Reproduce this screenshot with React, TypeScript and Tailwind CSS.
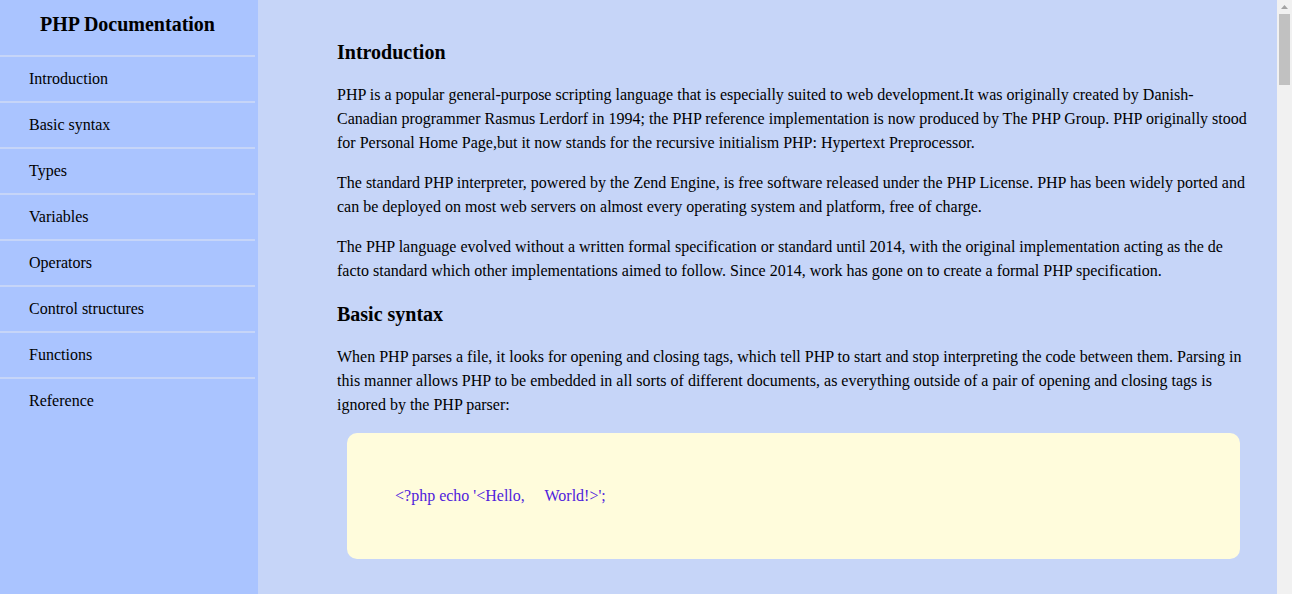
import React from 'react';

const navItems = [
  'Introduction',
  'Basic syntax',
  'Types',
  'Variables',
  'Operators',
  'Control structures',
  'Functions',
  'Reference',
];

interface Section {
  title: string;
  paragraphs: string[];
  code?: string[];
}

const sections: Section[] = [
  {
    title: 'Introduction',
    paragraphs: [
      'PHP is a popular general-purpose scripting language that is especially suited to web development.It was originally created by Danish-Canadian programmer Rasmus Lerdorf in 1994; the PHP reference implementation is now produced by The PHP Group. PHP originally stood for Personal Home Page,but it now stands for the recursive initialism PHP: Hypertext Preprocessor.',
      'The standard PHP interpreter, powered by the Zend Engine, is free software released under the PHP License. PHP has been widely ported and can be deployed on most web servers on almost every operating system and platform, free of charge.',
      'The PHP language evolved without a written formal specification or standard until 2014, with the original implementation acting as the de facto standard which other implementations aimed to follow. Since 2014, work has gone on to create a formal PHP specification.',
    ],
  },
  {
    title: 'Basic syntax',
    paragraphs: [
      'When PHP parses a file, it looks for opening and closing tags, which tell PHP to start and stop interpreting the code between them. Parsing in this manner allows PHP to be embedded in all sorts of different documents, as everything outside of a pair of opening and closing tags is ignored by the PHP parser:',
    ],
    code: ["<?php echo '<Hello,     World!>';"],
  },
  {
    title: 'Types',
    paragraphs: [
      'Every single expression in PHP has one of the following built-in types depending on its value: null, bool, int, float (floating-point number), string, array, object, callable and resource.',
      'PHP is a dynamically typed language, which means that by default there is no need to specify the type of a variable, as this will be determined at runtime. However, it is possible to statically type some aspect of the language via the use of type declarations.',
    ],
    code: ['$a_bool = true;   // a bool', '$a_str  = "foo";  // a string', '$an_int = 12;     // an int'],
  },
  {
    title: 'Variables',
    paragraphs: [
      'Variables in PHP are represented by a dollar sign followed by the name of the variable. The variable name is case-sensitive.',
      'A valid variable name starts with a letter (A-Z, a-z, or the bytes from 128 through 255) or underscore, followed by any number of letters, numbers, or underscores.',
    ],
    code: ["$var = 'Bob';", "$Var = 'Joe';", 'echo "$var, $Var";      // outputs "Bob, Joe"'],
  },
  {
    title: 'Operators',
    paragraphs: [
      'An operator is something that takes one or more values (or expressions, in programming jargon) and yields another value (so that the construction itself becomes an expression).',
      'Operators can be grouped according to the number of values they take. Unary operators take only one value, for example ! (the logical not operator) or ++ (the increment operator). Binary operators take two values, such as the familiar arithmetical operators + (plus) and - (minus), and the majority of PHP operators fall into this category. Finally, there is a single ternary operator, ? :, which takes three values; this is usually referred to simply as "the ternary operator".',
    ],
    code: ['$a = 5 + 3;', '$b = $a * 2;', '$c = $b > 10 ? "big" : "small";'],
  },
  {
    title: 'Control structures',
    paragraphs: [
      'Any PHP script is built out of a series of statements. A statement can be an assignment, a function call, a loop, a conditional statement or even a statement that does nothing (an empty statement). Statements usually end with a semicolon.',
      'In addition, statements can be grouped into a statement-group by encapsulating a group of statements with curly braces. A statement-group is a statement by itself as well.',
    ],
    code: ['if ($a > $b) {', '    echo "a is bigger than b";', '}'],
  },
  {
    title: 'Functions',
    paragraphs: [
      'A function is defined using the function keyword, a name, a list of parameters (which might be empty) separated by commas (,) enclosed in parentheses, followed by the body of the function enclosed in curly braces.',
      'Any valid PHP code may appear inside a function, even other functions and class definitions. Function names follow the same rules as other labels in PHP.',
    ],
    code: ['function foo($arg_1, $arg_2) {', '    echo "Example function.";', '    return $arg_1;', '}'],
  },
  {
    title: 'Reference',
    paragraphs: [
      'All the documentation in this page is taken from the PHP Manual, which is maintained by The PHP Group and its documentation team.',
    ],
  },
];

const serif = "font-['Liberation_Serif','Times_New_Roman',serif]";

const ScrollTrack = function () {
  return (
    <div className="flex h-screen w-[15px] shrink-0 flex-col bg-[#f1f1f1]">
      <div className="flex h-[14px] items-center justify-center pb-[1px]">
        <svg width="7" height="4" viewBox="0 0 7 4">
          <path d="M3.5 0 L7 4 L0 4 Z" fill="#a3a3a3" />
        </svg>
      </div>
      <div className="ml-[2px] h-[71px] w-[11px] bg-[#c1c1c1]" />
    </div>
  );
};

const App = function () {
  return (
    <div className={`flex h-screen bg-[#c6d5f8] text-black ${serif}`}>
      <div className="flex-1 overflow-y-auto [scrollbar-width:none]">
        <div className="flex min-h-full">
          <aside className="sticky top-0 h-screen w-[258px] shrink-0 bg-[#aac4ff]">
            <header className="h-[55px] w-[255px] pt-3 text-center">
              <h1 className="text-xl leading-6 font-bold">PHP Documentation</h1>
            </header>
            <ul className="w-[255px]">
              {navItems.map((item) => (
                <li key={item} className="border-t-2 border-[#c6d5f8]">
                  <a href={`#${item}`} className="block py-[10px] pl-[29px] text-base leading-6 text-black">
                    {item}
                  </a>
                </li>
              ))}
            </ul>
          </aside>
          <main className="flex min-w-0 flex-1 flex-col gap-[19px] pt-10 pr-[27px] pb-10 pl-[79px]">
            {sections.map((section) => (
              <section key={section.title} id={section.title}>
                <h2 className="mb-[19px] text-xl leading-6 font-bold">{section.title}</h2>
                <div className="flex flex-col gap-4">
                  {section.paragraphs.map((p) => (
                    <p key={p.slice(0, 20)} className="text-base leading-6">
                      {p}
                    </p>
                  ))}
                </div>
                {section.code && (
                  <pre
                    className={`mx-[10px] mt-4 mb-6 rounded-[10px] bg-[#fffcdc] py-[51px] pl-12 text-base leading-6 whitespace-pre text-[#4f22dc] ${serif}`}
                  >
                    {section.code.join('\n')}
                  </pre>
                )}
              </section>
            ))}
          </main>
        </div>
      </div>
      <ScrollTrack />
    </div>
  );
};

export default App;
